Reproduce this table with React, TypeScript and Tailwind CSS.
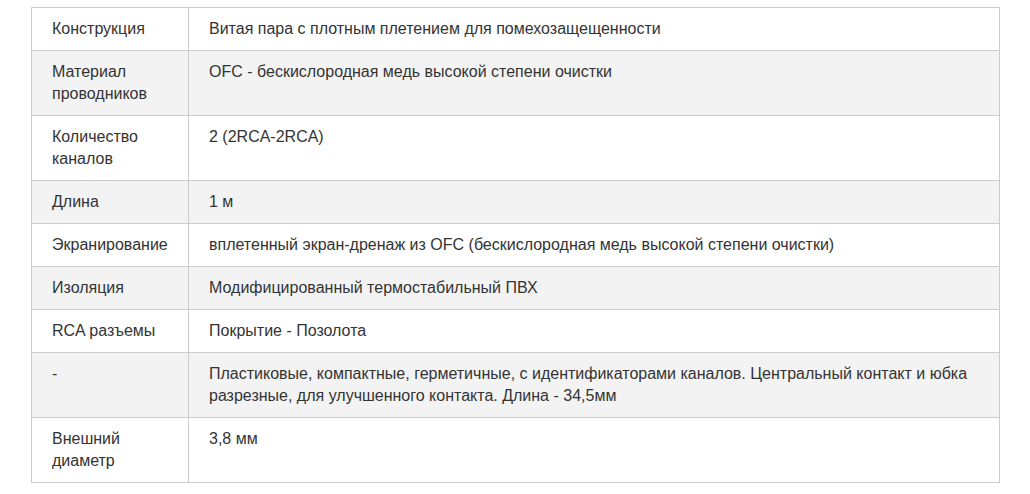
const rows: [string, string][] = [
  ["Конструкция", "Витая пара с плотным плетением для помехозащещенности"],
  ["Материал проводников", "OFC - бескислородная медь высокой степени очистки"],
  ["Количество каналов", "2 (2RCA-2RCA)"],
  ["Длина", "1 м"],
  ["Экранирование", "вплетенный экран-дренаж из OFC (бескислородная медь высокой степени очистки)"],
  ["Изоляция", "Модифицированный термостабильный ПВХ"],
  ["RCA разъемы", "Покрытие - Позолота"],
  [
    "-",
    "Пластиковые, компактные, герметичные, с идентификаторами каналов. Центральный контакт и юбка разрезные, для улучшенного контакта. Длина - 34,5мм",
  ],
  ["Внешний диаметр", "3,8 мм"],
]

export default function App() {
  return (
    <div className="min-h-screen bg-white pl-[31px] pt-[7px] font-['Liberation_Sans',Arial,sans-serif] text-[16px] leading-[22px] text-[#333]">
      <table className="w-[969px] table-fixed border-collapse border border-[#ccc]">
        <colgroup>
          <col className="w-[157px]" />
          <col />
        </colgroup>
        <tbody>
          {rows.map(([name, value], i) => (
            <tr key={i} className={i % 2 === 1 ? "bg-[#f3f3f3]" : "bg-white"}>
              <td className="border border-[#ccc] px-5 py-[10px] align-top">{name}</td>
              <td className="border border-[#ccc] px-5 py-[10px] align-top">{value}</td>
            </tr>
          ))}
        </tbody>
      </table>
    </div>
  )
}
